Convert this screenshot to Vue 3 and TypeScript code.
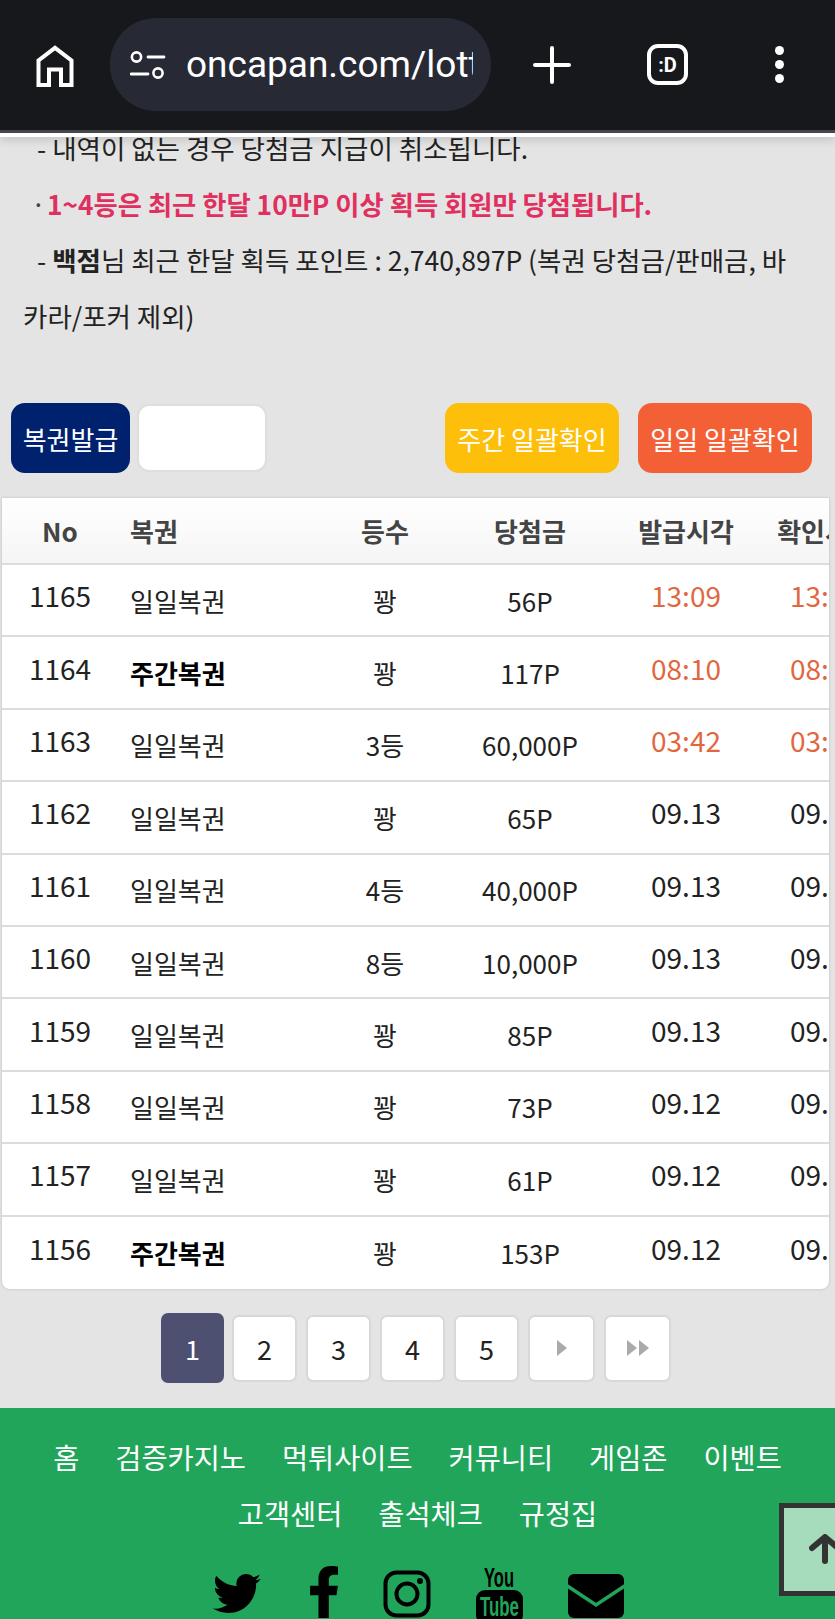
<template>
    <div class="page">
        <!-- 브라우저 상단바 -->
        <div class="topbar">
            <svg class="home" width="38" height="42" viewBox="0 0 38 42">
                <path d="M2.5 40V15.5L19 2.8 35.5 15.5V40H25V24.5H13V40Z" fill="none" stroke="#fff" stroke-width="4" stroke-linejoin="miter" />
            </svg>
            <div class="url">
                <svg width="38" height="30" viewBox="0 0 38 30">
                    <circle cx="6.5" cy="7" r="4.6" fill="none" stroke="#fff" stroke-width="2.6" />
                    <path d="M18 7H34M1 24H18" stroke="#fff" stroke-width="2.8" stroke-linecap="round" />
                    <circle cx="28" cy="23" r="4.6" fill="none" stroke="#fff" stroke-width="2.6" />
                </svg>
                <span class="url-text">oncapan.com/lotto</span>
            </div>
            <svg class="plus" width="38" height="38" viewBox="0 0 38 38">
                <path d="M19 2V36M2 19H36" stroke="#fff" stroke-width="4" stroke-linecap="round" />
            </svg>
            <div class="tabs"><span>:D</span></div>
            <div class="dots"><i></i><i></i><i></i></div>
        </div>

        <div class="notice">
            <p class="indent">- 내역이 없는 경우 당첨금 지급이 취소됩니다.</p>
            <p class="warn"><span class="warn-dot">·</span><b>1~4등은 최근 한달 10만P 이상 획득 회원만 당첨됩니다.</b></p>
            <p class="indent">- <b>백점</b>님 최근 한달 획득 포인트 : 2,740,897P (복권 당첨금/판매금, 바<br /><span class="unindent">카라/포커 제외)</span></p>
        </div>

        <div class="actions">
            <div class="btn btn-issue">복권발급</div>
            <div class="count-box"></div>
            <div class="btn btn-week">주간 일괄확인</div>
            <div class="btn btn-day">일일 일괄확인</div>
        </div>

        <div class="table">
            <div class="row head">
                <div class="c c-no">No</div>
                <div class="c c-name">복권</div>
                <div class="c c-rank">등수</div>
                <div class="c c-prize">당첨금</div>
                <div class="c c-time">발급시각</div>
                <div class="c c-check">확인시각</div>
            </div>
            <div class="row" v-for="item in lottoList" :key="item.no">
                <div class="c c-no big">{{ item.no }}</div>
                <div class="c c-name" :class="{ weekly: item.weekly }">{{ item.weekly ? '주간복권' : '일일복권' }}</div>
                <div class="c c-rank">{{ item.rank }}</div>
                <div class="c c-prize">{{ item.prize }}</div>
                <div class="c c-time big" :class="{ today: item.today }">{{ item.time }}</div>
                <div class="c c-check big" :class="{ today: item.today }">{{ item.time }}</div>
            </div>
        </div>

        <div class="pager">
            <div class="pg active">1</div>
            <div class="pg" v-for="n in [2, 3, 4, 5]" :key="n">{{ n }}</div>
            <div class="pg pg-arrow">
                <svg width="12" height="18" viewBox="0 0 12 18"><path d="M1 1L11 9 1 17Z" fill="#aaa" /></svg>
            </div>
            <div class="pg pg-arrow">
                <svg width="24" height="18" viewBox="0 0 24 18"><path d="M1 1L11 9 1 17ZM13 1L23 9 13 17Z" fill="#aaa" /></svg>
            </div>
        </div>

        <div class="footer">
            <div class="links">
                <span v-for="link in footerLinks" :key="link">{{ link }}</span>
            </div>
            <div class="sns">
                <svg class="sns-bird" width="48" height="41" viewBox="0 0 512 416">
                    <path d="M459.37 103.716c.325 4.548.325 9.097.325 13.645 0 138.72-105.583 298.558-298.558 298.558-59.452 0-114.68-17.219-161.137-47.106 8.447.974 16.568 1.299 25.34 1.299 49.055 0 94.213-16.568 130.274-44.832-46.132-.975-84.792-31.188-98.112-72.772 6.498.974 12.995 1.624 19.818 1.624 9.421 0 18.843-1.3 27.614-3.573-48.081-9.747-84.143-51.98-84.143-102.985v-1.299c13.969 7.797 30.214 12.67 47.431 13.319-28.264-18.843-46.781-51.005-46.781-87.391 0-19.492 5.197-37.36 14.294-52.954 51.655 63.675 129.3 105.258 216.365 109.807-1.624-7.797-2.599-15.918-2.599-24.04C248 47.188 294.782.082 352.934.082c30.213 0 57.502 12.67 76.67 33.137 23.715-4.548 46.456-13.32 66.599-25.34-7.798 24.366-24.366 44.833-46.132 57.827 21.117-2.273 41.584-8.122 60.426-16.243-14.292 20.791-32.161 39.308-52.628 54.253z" />
                </svg>
                <svg width="28" height="52" viewBox="22 0 272 512" preserveAspectRatio="none">
                    <path d="M279.14 288l14.22-92.66h-88.91v-60.13c0-25.35 12.42-50.06 52.24-50.06h40.42V6.26S260.43 0 225.36 0c-73.22 0-121.08 44.38-121.08 124.72v70.62H22.89V288h81.39v224h100.17V288z" />
                </svg>
                <svg width="48" height="48" viewBox="0 0 48 48">
                    <rect x="2.5" y="2.5" width="43" height="43" rx="11" fill="none" stroke="#000" stroke-width="4" />
                    <circle cx="24" cy="24" r="10.5" fill="none" stroke="#000" stroke-width="4" />
                    <circle cx="37" cy="11" r="3" />
                </svg>
                <svg class="sns-yt" width="47" height="54" viewBox="0 0 47 54">
                    <text x="8" y="21" class="yt" textLength="30" lengthAdjust="spacingAndGlyphs">You</text>
                    <rect x="0" y="24" width="47" height="34" rx="9" />
                    <text x="4" y="50" class="yt yt-tube" textLength="39" lengthAdjust="spacingAndGlyphs">Tube</text>
                </svg>
                <svg width="56" height="44" viewBox="0 0 56 44">
                    <rect width="56" height="44" rx="6" />
                    <path d="M-2 11L28 31 58 11" fill="none" stroke="#21a55b" stroke-width="3.5" />
                </svg>
            </div>
        </div>

        <div class="to-top">
            <svg width="32" height="30" viewBox="0 0 32 30">
                <path d="M3 14L16 3 29 14M16 4V27" fill="none" stroke="#333" stroke-width="6" stroke-linecap="round" stroke-linejoin="round" />
            </svg>
        </div>
    </div>
</template>

<script setup lang="ts">
    // 복권 내역 한 줄
    interface Ilotto {
        no: number;
        weekly: boolean; // 주간복권 여부
        rank: string;
        prize: string;
        time: string;
        today: boolean; // 오늘 발급분은 시각 표시
    }

    const lottoList: Array<Ilotto> = [
        { no: 1165, weekly: false, rank: '꽝', prize: '56P', time: '13:09', today: true },
        { no: 1164, weekly: true, rank: '꽝', prize: '117P', time: '08:10', today: true },
        { no: 1163, weekly: false, rank: '3등', prize: '60,000P', time: '03:42', today: true },
        { no: 1162, weekly: false, rank: '꽝', prize: '65P', time: '09.13', today: false },
        { no: 1161, weekly: false, rank: '4등', prize: '40,000P', time: '09.13', today: false },
        { no: 1160, weekly: false, rank: '8등', prize: '10,000P', time: '09.13', today: false },
        { no: 1159, weekly: false, rank: '꽝', prize: '85P', time: '09.13', today: false },
        { no: 1158, weekly: false, rank: '꽝', prize: '73P', time: '09.12', today: false },
        { no: 1157, weekly: false, rank: '꽝', prize: '61P', time: '09.12', today: false },
        { no: 1156, weekly: true, rank: '꽝', prize: '153P', time: '09.12', today: false },
    ]

    const footerLinks: Array<string> = ['홈', '검증카지노', '먹튀사이트', '커뮤니티', '게임존', '이벤트', '고객센터', '출석체크', '규정집']
</script>

<style>
    html, body {
        margin: 0;
        background-color: #e4e4e4;
    }
</style>

<style scoped>
    .page {
        position: relative;
        width: 835px;
        height: 1619px;
        overflow: hidden;
        background-color: #e4e4e4;
        color: #222222;
        font-family: "Noto Sans CJK KR", "Noto Sans", sans-serif;
    }
    .topbar {
        position: absolute;
        top: 0;
        left: 0;
        z-index: 2;
        width: 100%;
        height: 130px;
        box-sizing: content-box;
        background-color: #17181b;
        border-bottom: 3px solid #46474a;
        box-shadow: 0 4px 0 #ffffff, 0 8px 8px rgba(0, 0, 0, 0.12);
    }
    .home {
        position: absolute;
        left: 36px;
        top: 45px;
    }
    .url {
        position: absolute;
        left: 110px;
        top: 18px;
        width: 381px;
        height: 93px;
        box-sizing: border-box;
        padding-left: 20px;
        border-radius: 46px;
        background-color: #272a35;
        display: flex;
        align-items: center;
    }
    .url-text {
        width: 287px;
        margin-left: 18px;
        overflow: hidden;
        white-space: nowrap;
        color: #ffffff;
        font-family: Roboto, sans-serif;
        font-size: 37px;
    }
    .plus {
        position: absolute;
        left: 533px;
        top: 46px;
    }
    .tabs {
        position: absolute;
        left: 647px;
        top: 44px;
        width: 41px;
        height: 41px;
        box-sizing: border-box;
        border: 4px solid #ffffff;
        border-radius: 11px;
        display: flex;
        align-items: center;
        justify-content: center;
        color: #ffffff;
        font-family: Roboto, sans-serif;
        font-size: 20px;
        font-weight: 700;
    }
    .dots {
        position: absolute;
        left: 775px;
        top: 46px;
        display: flex;
        flex-direction: column;
        gap: 5px;
    }
    .dots i {
        display: block;
        width: 9px;
        height: 9px;
        border-radius: 50%;
        background-color: #ffffff;
    }
    .notice {
        padding: 120px 0 0 23px;
        font-size: 26.5px;
        line-height: 56px;
        color: #222222;
    }
    .notice p {
        margin: 0;
        white-space: nowrap;
    }
    .indent {
        padding-left: 14px;
    }
    .unindent {
        margin-left: -14px;
    }
    .warn {
        display: flex;
        padding-left: 8px;
    }
    .warn b {
        color: #e0305f;
        font-size: 26.3px;
    }
    .warn-dot {
        width: 16px;
        color: #444444;
    }
    .actions {
        display: flex;
        align-items: center;
        margin-top: 59px;
        padding-left: 11px;
    }
    .btn {
        height: 70px;
        border-radius: 14px;
        display: flex;
        align-items: center;
        justify-content: center;
        color: #ffffff;
        font-size: 26px;
    }
    .btn-issue {
        width: 119px;
        background-color: #00226e;
    }
    .count-box {
        width: 130px;
        height: 68px;
        margin-left: 7px;
        box-sizing: border-box;
        border: 2px solid #dedede;
        border-radius: 12px;
        background-color: #ffffff;
    }
    .btn-week {
        width: 174px;
        margin-left: 178px;
        background-color: #fdbf09;
    }
    .btn-day {
        width: 174px;
        margin-left: 19px;
        background-color: #f46036;
    }
    .table {
        width: 827px;
        margin: 25px 0 0 2px;
        overflow: hidden;
        background-color: #ffffff;
        border-radius: 0 0 8px 8px;
        box-shadow: 0 0 3px rgba(0, 0, 0, 0.18);
    }
    .row {
        width: 890px;
        height: 72.4px;
        box-sizing: border-box;
        display: grid;
        grid-template-columns: 116px 202px 130px 160px 152px 126px;
        align-items: center;
        border-bottom: 2px solid #dcdcdc;
        font-size: 26px;
        color: #222222;
    }
    .row:last-child {
        border-bottom: none;
    }
    .head {
        height: 67px;
        background: linear-gradient(#ffffff, #f5f5f5);
        font-weight: 700;
        color: #444444;
    }
    .c {
        text-align: center;
        white-space: nowrap;
    }
    .c-name {
        text-align: left;
        padding-left: 12px;
    }
    .big {
        font-size: 28px;
        padding-bottom: 10px;
    }
    .weekly {
        font-weight: 700;
        color: #000000;
    }
    .today {
        color: #e2673f;
    }
    .pager {
        display: flex;
        align-items: center;
        gap: 9px;
        height: 119px;
        padding-left: 161px;
    }
    .pg {
        width: 65px;
        height: 67px;
        box-sizing: border-box;
        border: 2px solid #d8d8d8;
        border-radius: 7px;
        background-color: #ffffff;
        display: flex;
        align-items: center;
        justify-content: center;
        font-size: 27px;
        color: #222222;
    }
    .active {
        height: 70px;
        width: 63px;
        margin-right: -1px;
        border: none;
        background-color: #4d5070;
        color: #ffffff;
    }
    .pg-arrow {
        width: 67px;
    }
    .footer {
        background-color: #21a55b;
        height: 212px;
        padding-top: 21px;
    }
    .links {
        display: flex;
        flex-wrap: wrap;
        justify-content: center;
        column-gap: 36px;
        padding: 0 40px;
        color: #ffffff;
        font-size: 28.4px;
        line-height: 56px;
    }
    .sns {
        display: flex;
        align-items: flex-end;
        height: 52px;
        padding: 25px 0 0 213px;
        gap: 45px;
    }
    .sns-bird {
        margin-right: 4px;
        margin-bottom: 4px;
    }
    .sns-yt {
        margin-bottom: -2px;
        overflow: hidden;
    }
    .yt {
        font-family: "Liberation Sans", sans-serif;
        font-weight: 700;
        font-size: 28px;
    }
    .yt-tube {
        fill: #21a55b;
    }
    .to-top {
        position: absolute;
        left: 779px;
        top: 1503px;
        width: 80px;
        height: 93px;
        box-sizing: border-box;
        border: 5px solid #333333;
        background-color: #a6dcbc;
        padding: 26px 0 0 25px;
    }
</style>
